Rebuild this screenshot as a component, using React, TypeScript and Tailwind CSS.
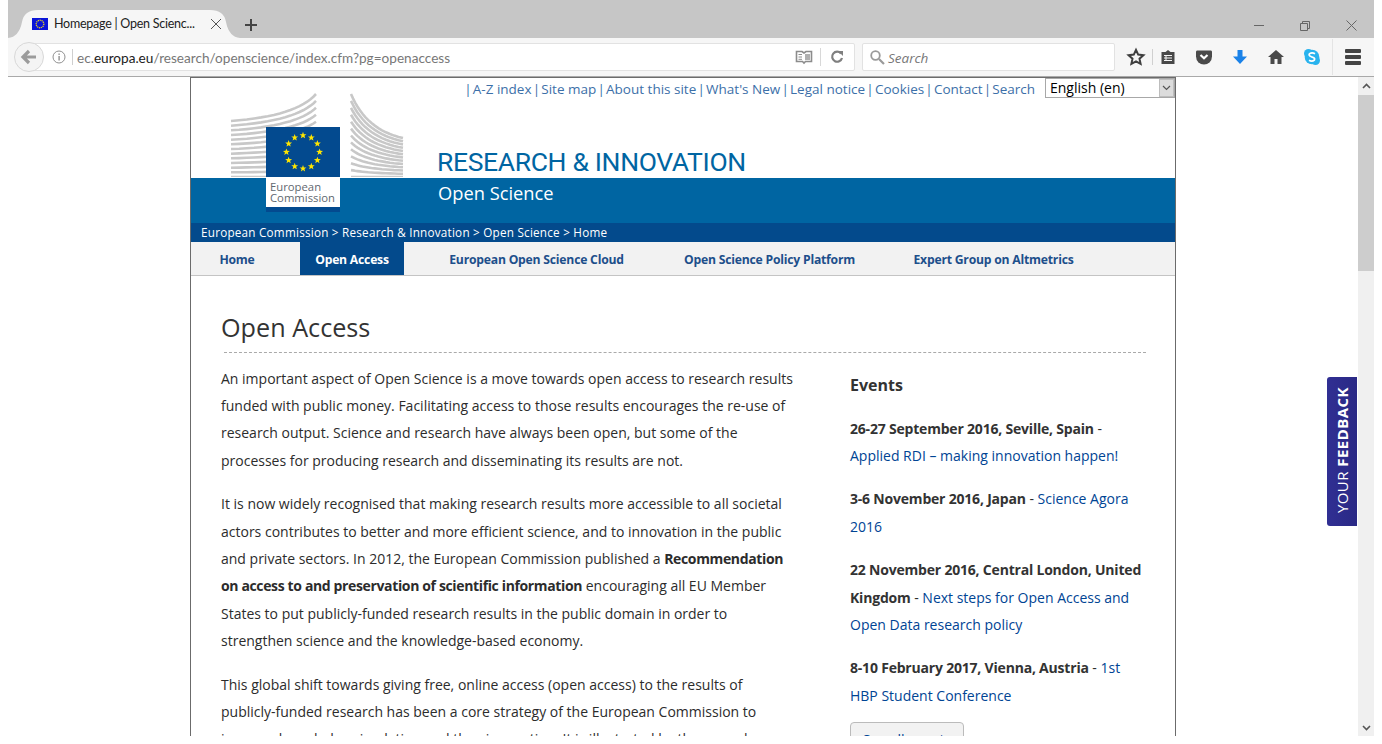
import React from "react";

const font = { sans: "font-['Open_Sans','Noto_Sans',sans-serif]" };

function Stars({ cx, cy, r, s }: { cx: number; cy: number; r: number; s: number }) {
  const items = [];
  for (let i = 0; i < 12; i++) {
    const a = (i * Math.PI) / 6;
    const x = cx + r * Math.sin(a);
    const y = cy - r * Math.cos(a);
    const pts = [];
    for (let k = 0; k < 10; k++) {
      const rr = k % 2 === 0 ? s : s * 0.42;
      const b = (k * Math.PI) / 5;
      pts.push(`${(x + rr * Math.sin(b)).toFixed(2)},${(y - rr * Math.cos(b)).toFixed(2)}`);
    }
    items.push(<polygon key={i} points={pts.join(" ")} fill="#ffe600" />);
  }
  return <>{items}</>;
}

type P = [number, number];
function fan(p0: P, p1: P, p2: P, n: number, bottom: number) {
  const paths = [];
  for (let i = 0; i < n; i++) {
    const t = i / (n - 1);
    const pts = [];
    for (let j = 0; j <= 16; j++) {
      const u = j / 16;
      const x = (1 - u) * (1 - u) * p0[0] + 2 * u * (1 - u) * p1[0] + u * u * p2[0];
      const y = (1 - u) * (1 - u) * p0[1] + 2 * u * (1 - u) * p1[1] + u * u * p2[1];
      const yy = y + (bottom - y) * t;
      pts.push(`${x.toFixed(1)},${yy.toFixed(1)}`);
    }
    paths.push(<polyline key={i} points={pts.join(" ")} fill="none" stroke="#c8c8c8" strokeWidth="2.6" />);
  }
  return paths;
}

function Building() {
  return (
    <svg className="absolute left-0 top-[-1px]" width="984" height="100" viewBox="191 77 984 100">
      {fan([231, 121], [297, 116], [316, 94], 13, 177)}
      {fan([351, 94], [366, 130], [403, 138], 13, 177)}
    </svg>
  );
}

function TopLink({ t }: { t: string }) {
  return (
    <>
      <span className="text-[#3c6fa8] mx-[1.2px]">|</span>
      <span>{t}</span>
    </>
  );
}

function Ico({ children, w = 20 }: { children: React.ReactNode; w?: number }) {
  return (
    <svg width={w} height={20} viewBox="0 0 20 20" className="shrink-0">
      {children}
    </svg>
  );
}

function Toolbar() {
  return (
    <div className="h-[38px] bg-[#f6f6f6] flex items-center border-b border-[#a9a9a9] box-content shrink-0 relative">
      <div className="absolute left-[6px] top-[4px] w-[30px] h-[30px] rounded-full border border-[#d8d8d8] bg-[#f4f4f4] flex items-center justify-center z-10">
        <svg width="18" height="18" viewBox="0 0 18 18">
          <path d="M9 3 L3 9 L9 15 M3.5 9 H16" stroke="#9b9b9b" strokeWidth="3.2" fill="none" />
        </svg>
      </div>
      <div className="ml-[20px] w-[827px] h-[28px] bg-white border border-[#e2e2e2] rounded-[2px] flex items-center pl-[20px]">
        <svg width="16" height="16" viewBox="0 0 16 16" className="ml-[2px] shrink-0">
          <circle cx="8" cy="8" r="6" fill="none" stroke="#909090" strokeWidth="1" />
          <rect x="7.4" y="7" width="1.4" height="4.5" fill="#909090" />
          <rect x="7.4" y="4.5" width="1.4" height="1.4" fill="#909090" />
        </svg>
        <div className="w-px h-[16px] bg-[#cfcfcf] ml-[5px] mr-[4px]" />
        <span className="text-[13.6px] text-[#777] font-['Lato',sans-serif] whitespace-nowrap pt-[2px]">
          ec.<span className="text-[#222]">europa.eu</span>/research/openscience/index.cfm?pg=openaccess
        </span>
        <div className="flex-1" />
        <svg width="18" height="16" viewBox="0 0 18 16" className="shrink-0">
          <path d="M1.5 2.5 H7 L9 4 L11 2.5 H16.5 V12.5 H10.5 L9 14 L7.5 12.5 H1.5 Z" fill="none" stroke="#8c8c8c" strokeWidth="1.6" />
          <path d="M3.5 5.5 H7 M3.5 8 H7 M3.5 10.3 H7" stroke="#8c8c8c" />
          <rect x="10" y="5" width="5" height="6" fill="#b0b0b0" />
        </svg>
        <div className="w-px h-[18px] bg-[#d8d8d8] ml-[7px] mr-[8px]" />
        <svg width="16" height="16" viewBox="0 0 16 16" className="shrink-0 mr-[9px]">
          <path d="M12 4.5 A5 5 0 1 0 13 9" fill="none" stroke="#7f7f7f" strokeWidth="2.2" />
          <path d="M9 2 H14 V7 Z" fill="#7f7f7f" />
        </svg>
      </div>
      <div className="ml-[7px] w-[253px] h-[28px] bg-white border border-[#e2e2e2] rounded-[2px] flex items-center pl-[6px]">
        <svg width="16" height="16" viewBox="0 0 16 16">
          <circle cx="6.5" cy="6.5" r="4.3" fill="none" stroke="#9a9a9a" strokeWidth="1.8" />
          <path d="M10 10 L15 15" stroke="#9a9a9a" strokeWidth="2.2" />
        </svg>
        <span className="ml-[3px] italic text-[13.5px] text-[#777] font-['Open_Sans',sans-serif] pt-[2px]">Search</span>
      </div>
      <div className="ml-[11px] flex items-center h-full">
        <Ico>
          <path d="M10 2.8 L12.2 7.6 L17.4 8.2 L13.5 11.7 L14.6 16.9 L10 14.3 L5.4 16.9 L6.5 11.7 L2.6 8.2 L7.8 7.6 Z" fill="none" stroke="#3f3f3f" strokeWidth="2" />
        </Ico>
        <div className="w-px h-[16px] bg-[#d0d0d0] ml-[6px] mr-[5px]" />
        <Ico>
          <path d="M3.5 5 H7.5 L10 3 L12.5 5 H16.5 V17 H3.5 Z" fill="#484848" />
          <path d="M6 8.5 H14 M6 11 H14 M6 13.5 H14 M8 8 V14" stroke="#f6f6f6" strokeWidth="1" />
        </Ico>
        <div className="w-[16px]" />
        <Ico>
          <path d="M3 3.5 H17 Q18 3.5 18 5 V9.5 A8 8 0 0 1 2 9.5 V5 Q2 3.5 3 3.5 Z" fill="#4a4a4a" />
          <path d="M6.5 8 L10 11.3 L13.5 8" stroke="#fff" strokeWidth="2.2" fill="none" />
        </Ico>
        <div className="w-[16px]" />
        <Ico>
          <path d="M7.5 3 H12.5 V9.5 H17 L10 17 L3 9.5 H7.5 Z" fill="#1a82e8" />
        </Ico>
        <div className="w-[16px]" />
        <Ico>
          <path d="M10 3 L18 10 H15.5 V17 H11.5 V12 H8.5 V17 H4.5 V10 H2 Z" fill="#4a4a4a" />
        </Ico>
        <div className="w-[16px]" />
        <svg width="20" height="20" viewBox="0 0 20 20" className="shrink-0">
          <circle cx="6.5" cy="6.5" r="4.5" fill="#29b3ee" />
          <circle cx="13.5" cy="13.5" r="4.5" fill="#29b3ee" />
          <circle cx="10" cy="10" r="7.3" fill="#29b3ee" />
          <path d="M13 6.7 Q10 5 7.6 6.6 Q6 8.6 9.5 9.8 Q13.6 10.8 12.4 13 Q10 15 7 13.2" fill="none" stroke="#fff" strokeWidth="1.7" />
        </svg>
        <div className="w-px h-[36px] bg-[#e4e4e4] ml-[10px] mr-[12px]" />
        <div className="flex flex-col gap-[2.5px]">
          <div className="w-[16px] h-[3.5px] bg-[#444] rounded-[1px]" />
          <div className="w-[16px] h-[3.5px] bg-[#444] rounded-[1px]" />
          <div className="w-[16px] h-[3.5px] bg-[#444] rounded-[1px]" />
        </div>
      </div>
    </div>
  );
}

function TabBar() {
  return (
    <div className="h-[38px] bg-[#c6c6c6] flex items-end shrink-0 relative">
      <svg width="232" height="28" viewBox="0 0 232 28" className="absolute left-0 bottom-0">
        <path d="M0 28 Q11 27 14 12 Q16 0 30 0 H202 Q216 0 218 12 Q221 27 232 28 Z" fill="#f6f6f6" />
      </svg>
      <div className="relative ml-[24px] w-[202px] h-[28px] flex items-center">
        <svg width="16" height="12" viewBox="0 0 16 12" className="shrink-0">
          <rect width="16" height="12" fill="#0a14d8" />
          <circle cx="8" cy="6" r="3.8" fill="none" stroke="#e8d020" strokeWidth="1.3" strokeDasharray="1.2 0.7" />
        </svg>
        <span className="ml-[6px] text-[12.5px] tracking-[-0.25px] text-[#222] font-['Lato',sans-serif] whitespace-nowrap w-[147px]">Homepage | Open Scienc...</span>
        <svg width="12" height="12" viewBox="0 0 12 12" className="ml-[9px] shrink-0">
          <path d="M1 1 L11 11 M11 1 L1 11" stroke="#555" strokeWidth="1" />
        </svg>
      </div>
      <svg width="14" height="14" viewBox="0 0 14 14" className="ml-[10px] mb-[6px] relative">
        <path d="M7 1 V13 M1 7 H13" stroke="#444" strokeWidth="2" />
      </svg>
      <div className="flex-1" />
      <div className="flex items-center gap-[36px] mr-[17px] self-start mt-[20px]">
        <div className="w-[10px] h-px bg-[#666]" />
        <svg width="10" height="10" viewBox="0 0 10 10"><path d="M.5 2.5 H7.5 V9.5 H.5 Z M2.5 2.5 V.5 H9.5 V7.5 H7.5" fill="none" stroke="#666" /></svg>
        <svg width="11" height="11" viewBox="0 0 11 11"><path d="M.5 .5 L10.5 10.5 M10.5 .5 L.5 10.5" stroke="#666" /></svg>
      </div>
    </div>
  );
}

const para = "mb-4";
const A = ({ children }: { children: React.ReactNode }) => <span className="text-[#004494]">{children}</span>;
const B = ({ children }: { children: React.ReactNode }) => <b className="tracking-[-0.36px]">{children}</b>;
const E = ({ children }: { children: React.ReactNode }) => <b className="tracking-[-0.2px] text-[#333]">{children}</b>;

function NavItem({ t, active, className }: { t: string; active?: boolean; className: string }) {
  return (
    <div className={`h-full flex items-center justify-center font-bold text-[12.2px] tracking-[-0.22px] pt-[4px] whitespace-nowrap ${active ? "bg-[#034a8c] text-white" : "text-[#1d4f8b]"} ${className}`}>
      {t}
    </div>
  );
}

function Page() {
  return (
    <div className={`w-[986px] ml-[182px] border-x border-[#6b6b6b] bg-white relative ${font.sans}`}>
      <div className="h-[101px] relative border-t border-[#6b6b6b]">
        <Building />
        <div className="flex justify-end items-start h-[20px] relative">
          <div className="text-[13.5px] text-[#3c6fa8] mt-[2px] mr-[10px] whitespace-nowrap leading-[18px]">
            <TopLink t="A-Z index" /><TopLink t="Site map" /><TopLink t="About this site" /><TopLink t="What's New" /><TopLink t="Legal notice" /><TopLink t="Cookies" /><TopLink t="Contact" /><TopLink t="Search" />
          </div>
          <div className="w-[130px] h-[20px] border border-[#a8a8a8] bg-white flex items-center text-[14px] text-black">
            <span className="pl-[4px] flex-1 leading-none">English (en)</span>
            <div className="w-[15px] h-[18px] bg-[#dcdcdc] border border-[#bdbdbd] flex items-center justify-center">
              <svg width="9" height="6" viewBox="0 0 9 6"><path d="M1 1 L4.5 4.5 L8 1" fill="none" stroke="#555" strokeWidth="1.2" /></svg>
            </div>
          </div>
        </div>
        <div className="absolute left-[246px] top-[67px] text-[26.5px] tracking-[-0.35px] text-[#0065a2] leading-[34px] whitespace-nowrap font-['Roboto',sans-serif]">RESEARCH &amp; INNOVATION</div>
      </div>
      <div className="h-[45px] bg-[#0065a2] pl-[247px] text-white text-[18.3px] leading-[30px]"><span>Open Science</span></div>
      <div className="h-[19px] bg-[#034a8c] text-white text-[11.7px] leading-[18px] pl-[10px] tracking-[0.02em] whitespace-nowrap">European Commission &gt; Research &amp; Innovation &gt; Open Science &gt; Home</div>
      <div className="h-[34px] bg-[#f2f2f2] border-b border-[#c4c4c4] flex items-stretch">
        <NavItem t="Home" className="ml-[28px] w-[36px]" />
        <NavItem t="Open Access" active className="ml-[45px] w-[104px]" />
        <NavItem t="European Open Science Cloud" className="ml-[46px] w-[173px]" />
        <NavItem t="Open Science Policy Platform" className="ml-[62px] w-[169px]" />
        <NavItem t="Expert Group on Altmetrics" className="ml-[60px] w-[159px]" />
      </div>

      <div className="pl-[30px] pr-[29px] pt-[32px]">
        <h1 className="text-[25.2px] leading-[38px] text-[#333] font-normal">Open Access</h1>
        <div className="ml-[3px] mt-[6px] border-t border-dashed border-[#aaa]" />
        <div className="flex text-[14px] leading-[27.4px] text-[#2c2c2c] mt-[11.5px]">
          <div className="w-[629px] whitespace-nowrap shrink-0">
            <p className={para}>An important aspect of Open Science is a move towards open access to research results<br />funded with public money. Facilitating access to those results encourages the re-use of<br />research output. Science and research have always been open, but some of the<br />processes for producing research and disseminating its results are not.</p>
            <p className={para}>It is now widely recognised that making research results more accessible to all societal<br />actors contributes to better and more efficient science, and to innovation in the public<br />and private sectors. In 2012, the European Commission published a <B>Recommendation<br />on access to and preservation of scientific information</B> encouraging all EU Member<br />States to put publicly-funded research results in the public domain in order to<br />strengthen science and the knowledge-based economy.</p>
            <p className={para}>This global shift towards giving free, online access (open access) to the results of<br />publicly-funded research has been a core strategy of the European Commission to<br />improve knowledge circulation and thus innovation. It is illustrated by the annual</p>
          </div>
          <div className="flex-1 whitespace-nowrap">
            <h2 className="text-[16px] font-bold text-[#333] leading-[27px] mt-[7px] mb-[16px]">Events</h2>
            <p className={para}><E>26-27 September 2016, Seville, Spain</E> -<br /><A>Applied RDI – making innovation happen!</A></p>
            <p className={para}><E>3-6 November 2016, Japan</E> - <A>Science Agora<br />2016</A></p>
            <p className={para}><E>22 November 2016, Central London, United<br />Kingdom</E> - <A>Next steps for Open Access and<br />Open Data research policy</A></p>
            <p className={para}><E>8-10 February 2017, Vienna, Austria</E> - <A>1st<br />HBP Student Conference</A></p>
            <div className="w-[114px] h-[36px] border border-[#bbb] rounded-[4px] bg-[#f2f2f2] text-center text-[#004494] leading-[33px] mt-[-3px]">See all events</div>
          </div>
        </div>
      </div>
    </div>
  );
}

function Logo() {
  return (
    <div className="absolute left-[266px] top-[127px] w-[74px] bg-white font-['Open_Sans',sans-serif]">
      <svg width="74" height="50" viewBox="0 0 74 50" className="block">
        <rect width="74" height="50" fill="#034a8f" />
        <Stars cx={37} cy={25} r={16.6} s={3.6} />
      </svg>
      <div className="h-[30px] text-[11.3px] leading-[11px] text-[#5f6870] pl-[4px] pt-[4px] whitespace-nowrap">European<br />Commission</div>
      <div className="h-[5px] bg-[#034a8f]" />
    </div>
  );
}

export default function App() {
  return (
    <div className="w-[1382px] h-[744px] bg-white overflow-hidden px-2 pb-2 relative">
      <div className="h-[736px] flex flex-col overflow-hidden relative">
        <TabBar />
        <Toolbar />
        <div className="flex-1 flex min-h-0 relative">
          <div className="flex-1 overflow-hidden">
            <Page />
          </div>
          <div className="w-[16px] bg-[#f0f0f0] flex flex-col items-center shrink-0">
            <div className="h-[18px] flex items-center justify-center">
              <svg width="9" height="6" viewBox="0 0 9 6"><path d="M1 5 L4.5 1.5 L8 5" fill="none" stroke="#555" strokeWidth="1.6" /></svg>
            </div>
            <div className="w-full h-[176px] bg-[#cdcdcd]" />
            <div className="flex-1" />
            <div className="h-[17px] flex items-center justify-center">
              <svg width="9" height="6" viewBox="0 0 9 6"><path d="M1 1 L4.5 4.5 L8 1" fill="none" stroke="#555" strokeWidth="1.6" /></svg>
            </div>
          </div>
          <div className="absolute right-[17px] top-[300px] w-[30px] h-[149px] bg-gradient-to-r from-[#302f93] to-[#2a2985] rounded-l-[3px] flex items-center justify-center">
            <span className="[writing-mode:vertical-rl] rotate-180 text-white text-[15px] font-['Open_Sans',sans-serif] tracking-[0.03em] whitespace-nowrap mb-[2px]">YOUR <b>FEEDBACK</b></span>
          </div>
        </div>
      </div>
      <Logo />
    </div>
  );
}
